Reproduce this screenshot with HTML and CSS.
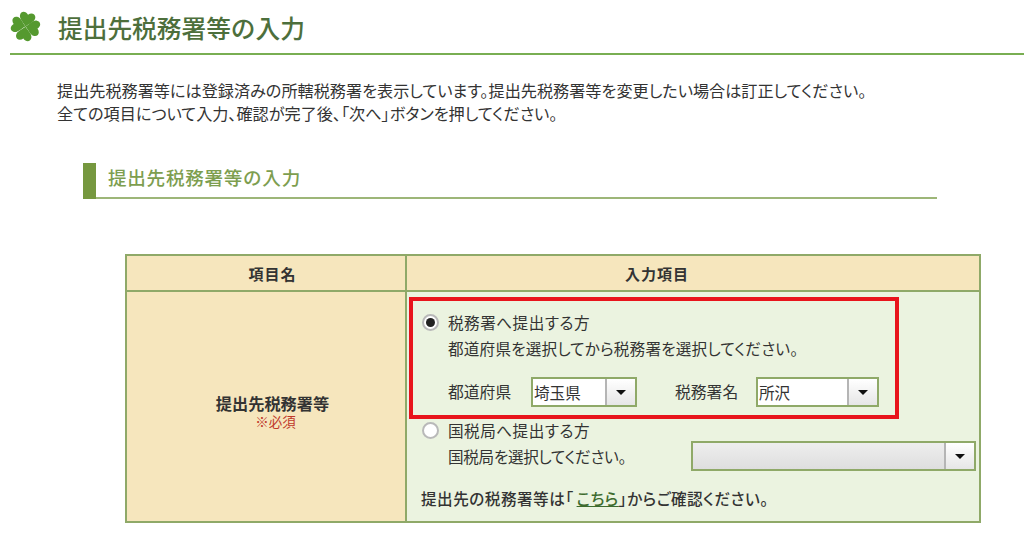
FILE: index.html
```html
<!DOCTYPE html>
<html lang="ja">
<head>
<meta charset="utf-8">
<title>提出先税務署等の入力</title>
<link rel="stylesheet" href="styles.css">
</head>
<body>
<header class="page-head">
  <svg class="clover" viewBox="0 0 32 32" aria-hidden="true">
    <defs>
      <path id="leaf" d="M0 0C-2-3-8-6-8-10.500C-8-15-3-16 0-12.500C3-16 8-15 8-10.500C8-6 2-3 0 0Z"/>
    </defs>
    <g fill="#55992f" transform="translate(16 16)">
      <use href="#leaf" transform="rotate(12)"/>
      <use href="#leaf" transform="rotate(100)"/>
      <use href="#leaf" transform="rotate(190)"/>
      <use href="#leaf" transform="rotate(282)"/>
    </g>
  </svg>
  <h1 class="page-title">提出先税務署等の入力</h1>
</header>
<p class="intro">提出先税務署等には登録済みの所轄税務署を表示しています。提出先税務署等を変更したい場合は訂正してください。<br>全ての項目について入力、確認が完了後、「次へ」ボタンを押してください。</p>
<h2 class="section-title"><span class="section-bar"></span><span class="section-text">提出先税務署等の入力</span></h2>
<table class="form-table">
  <thead>
    <tr><th class="col-name">項目名</th><th class="col-input">入力項目</th></tr>
  </thead>
  <tbody>
    <tr>
      <th class="row-name">提出先税務署等<span class="required">※必須</span></th>
      <td class="row-input">
        <div class="highlight">
          <div class="radio-line"><span class="radio radio-on"></span><span>税務署へ提出する方</span></div>
          <div class="hint">都道府県を選択してから税務署を選択してください。</div>
          <div class="select-row">
            <span class="select-label">都道府県</span>
            <div class="select select-pref"><span class="select-value">埼玉県</span><span class="select-btn"><i class="arrow"></i></span></div>
            <span class="select-label label-office">税務署名</span>
            <div class="select select-office"><span class="select-value">所沢</span><span class="select-btn"><i class="arrow"></i></span></div>
          </div>
        </div>
        <div class="radio-line radio-line-2"><span class="radio"></span><span>国税局へ提出する方</span></div>
        <div class="bureau-row">
          <span class="bureau-hint">国税局を選択してください。</span>
          <div class="select select-bureau"><span class="select-value"></span><span class="select-btn"><i class="arrow"></i></span></div>
        </div>
        <p class="confirm">提出先の税務署等は「<a href="#">こちら</a>」からご確認ください。</p>
      </td>
    </tr>
  </tbody>
</table>
</body>
</html>
```
FILE: styles.css
```css
html, body { margin: 0; padding: 0; background: #fff; }
body {
  width: 1024px;
  height: 552px;
  overflow: hidden;
  font-family: "Noto Sans CJK JP", "Noto Sans", sans-serif;
  color: #333;
  font-size: 16px;
  font-feature-settings: "palt";
}
.page-head {
  display: flex;
  align-items: center;
  height: 53px;
  margin-left: 10px;
  border-bottom: 2px solid #79ae52;
}
.clover { width: 31px; height: 31px; margin-top: -1px; flex: none; }
.page-title {
  margin: 0 0 0 17px;
  font-size: 24.7px;
  font-weight: 500;
  line-height: 30px;
  color: #4d6f3c;
  font-feature-settings: normal;
}
.intro {
  margin: 24px 0 0 57px;
  line-height: 23px;
  white-space: nowrap;
  color: #333;
  font-size: 16.15px;
}
.section-title {
  display: flex;
  align-items: center;
  height: 34px;
  margin: 38px 87px 0 83px;
  border-bottom: 2px solid #9db678;
  font-size: 18.6px;
  font-weight: 500;
  color: #7d9e4f;
  letter-spacing: 0.7px;
  font-feature-settings: normal;
}
.section-bar { width: 13px; height: 36px; background: #76983f; margin-bottom: -2px; flex: none; }
.section-text { margin-left: 12px; margin-top: -7px; }
.form-table {
  margin: 55px 0 0 125px;
  width: 856px;
  border-collapse: collapse;
  table-layout: fixed;
  border: 2px solid #8fa968;
}
.form-table th, .form-table td { border: 2px solid #8fa968; padding: 0; }
.form-table thead th {
  height: 34px;
  background: #f6e6bd;
  font-size: 15px;
  font-weight: 700;
  color: #333;
  letter-spacing: 1px;
  font-feature-settings: normal;
}
.form-table .col-name { padding-left: 13px; box-sizing: border-box; width: 280px; }
.form-table .col-input { padding-right: 72px; }
.form-table .row-name {
  background: #f6e6bd;
  font-size: 16.2px;
  font-weight: 700;
  color: #333;
  vertical-align: middle;
  line-height: 20px;
  font-feature-settings: normal;
  padding: 9px 0 0 13px;
}
.required {
  display: block;
  padding-left: 6px;
  font-size: 13.5px;
  font-weight: 400;
  line-height: 16px;
  color: #c0392b;
}
.row-input {
  background: #ebf3e0;
  vertical-align: top;
  height: 229px;
  font-size: 15.6px;
  color: #333;
}
.highlight {
  box-sizing: border-box;
  width: 490px;
  height: 122px;
  margin: 5px 0 0 2px;
  border: 4px solid #e8141c;
  padding: 10px 0 0 9px;
}
.radio-line { display: flex; align-items: center; line-height: 22px; letter-spacing: 0.5px; }
.radio {
  box-sizing: border-box;
  width: 17px;
  height: 17px;
  flex: none;
  margin-right: 9px;
  border-radius: 50%;
  background: #fff;
  border: 2px solid #b9b9b9;
  position: relative;
}
.radio-on::after {
  content: "";
  position: absolute;
  left: 2px;
  top: 2px;
  width: 9px;
  height: 9px;
  border-radius: 50%;
  background: #222;
}
.hint { margin: 4px 0 0 26px; line-height: 22px; letter-spacing: 0.2px; }
.select-row { display: flex; align-items: center; margin: 18px 0 0 26px; }
.select-label { width: 83px; flex: none; line-height: 22px; font-size: 15.8px; font-feature-settings: normal; }
.label-office { margin-left: 38px; width: 81px; }
.select {
  box-sizing: border-box;
  display: flex;
  height: 30px;
  border: 2px solid #8fa968;
  background: #fff;
  flex: none;
}
.select-pref { width: 106px; }
.select-office { width: 123px; }
.select-bureau { width: 285px; background: linear-gradient(#eee, #dedede); }
.select-value { flex: 1; padding-left: 1px; line-height: 26px; font-size: 15.6px; font-feature-settings: normal; }
.select-btn {
  width: 28px;
  flex: none;
  display: flex;
  align-items: center;
  justify-content: center;
  border-left: 2px solid #b5b5b5;
  background: linear-gradient(#fff, #e6e6e6);
}
.arrow {
  width: 0;
  height: 0;
  border-left: 5px solid transparent;
  border-right: 5px solid transparent;
  border-top: 5px solid #111;
}
.radio-line-2 { margin: 0 0 0 15px; }
.bureau-row { display: flex; align-items: center; margin: 0 3px 0 41px; justify-content: space-between; letter-spacing: -0.3px; }
.confirm { margin: 16px 0 0 14px; font-weight: 500; line-height: 22px; letter-spacing: 0.5px; }
.confirm a { color: #3d6b2f; text-decoration: underline; margin: 0 0 0 3px; }
```
